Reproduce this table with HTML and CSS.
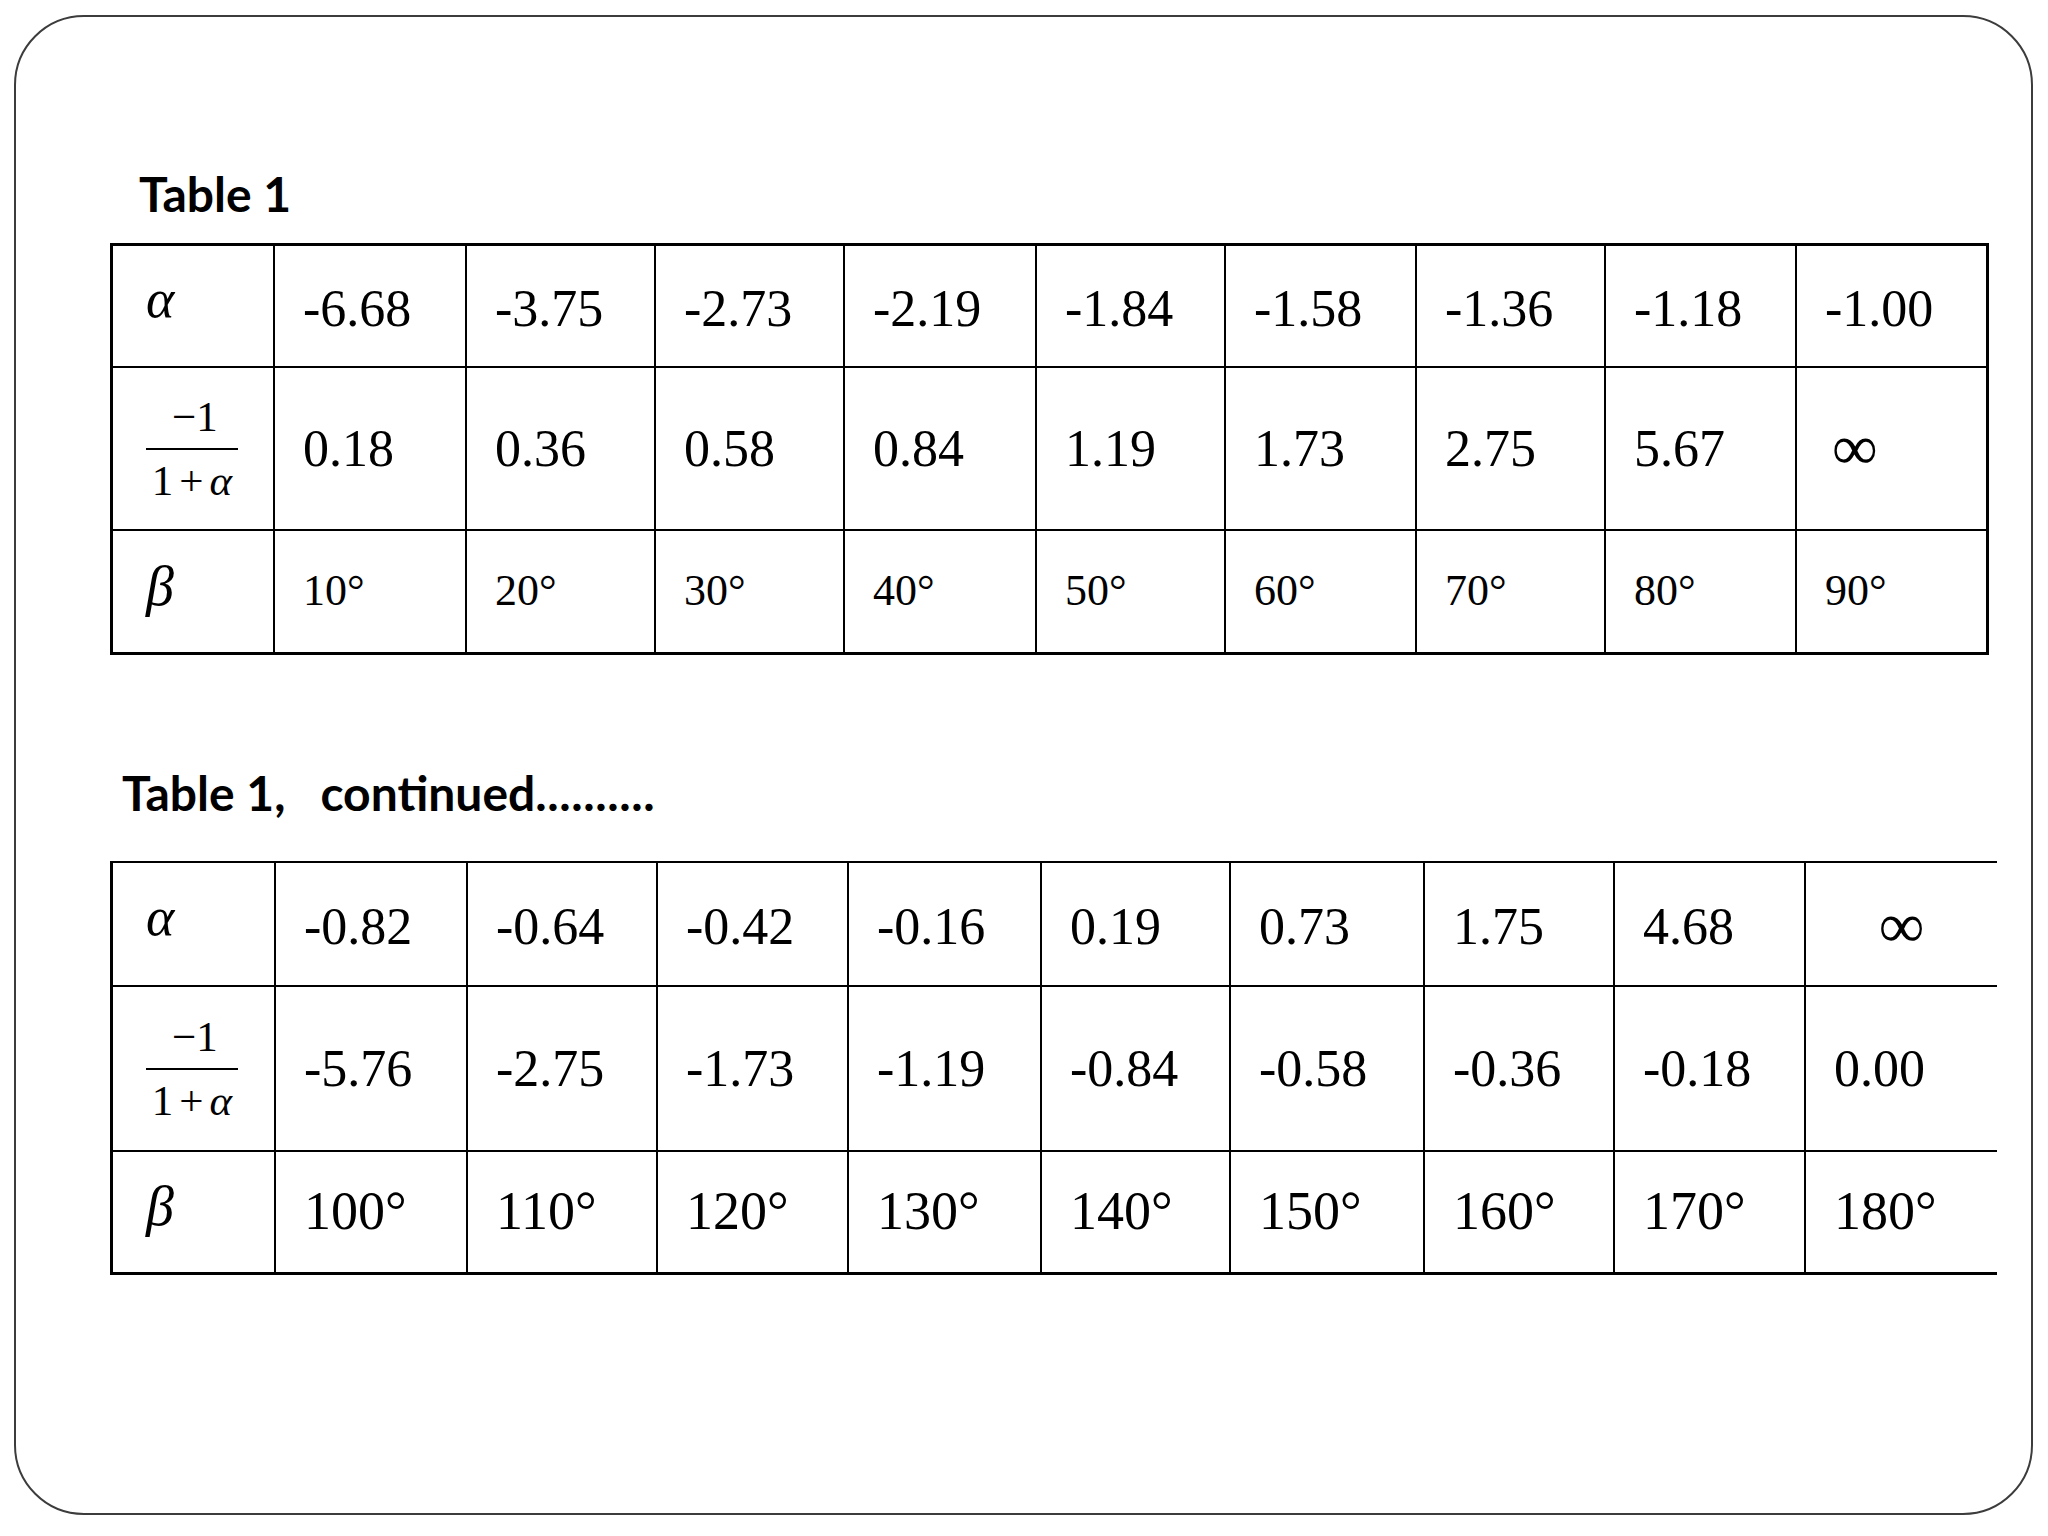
FILE: index.html
```html
<!DOCTYPE html>
<html lang="en">
<head>
<meta charset="utf-8">
<title>Table 1</title>
<link rel="stylesheet" href="styles.css">
</head>
<body>
<div class="slide">
  <h2 class="title title-1">Table 1</h2>
  <div class="grid grid-1">
    <div class="cell head"><span class="sym alpha">α</span></div>
    <div class="cell r1">-6.68</div>
    <div class="cell r1">-3.75</div>
    <div class="cell r1">-2.73</div>
    <div class="cell r1">-2.19</div>
    <div class="cell r1">-1.84</div>
    <div class="cell r1">-1.58</div>
    <div class="cell r1">-1.36</div>
    <div class="cell r1">-1.18</div>
    <div class="cell r1">-1.00</div>

    <div class="cell head">
      <div class="frac"><div class="num">−1</div><div class="bar"></div><div class="den">1<span class="op">+</span><i>α</i></div></div>
    </div>
    <div class="cell">0.18</div>
    <div class="cell">0.36</div>
    <div class="cell">0.58</div>
    <div class="cell">0.84</div>
    <div class="cell">1.19</div>
    <div class="cell">1.73</div>
    <div class="cell">2.75</div>
    <div class="cell">5.67</div>
    <div class="cell inf-left"><span class="inf">∞</span></div>

    <div class="cell head beta-cell"><span class="sym beta">β</span></div>
    <div class="cell small">10°</div>
    <div class="cell small">20°</div>
    <div class="cell small">30°</div>
    <div class="cell small">40°</div>
    <div class="cell small">50°</div>
    <div class="cell small">60°</div>
    <div class="cell small">70°</div>
    <div class="cell small">80°</div>
    <div class="cell small">90°</div>
  </div>

  <h2 class="title title-2">Table 1,&nbsp;&nbsp;&nbsp;continued<span class="dots">..........</span></h2>
  <div class="grid grid-2">
    <div class="cell head"><span class="sym alpha">α</span></div>
    <div class="cell r1">-0.82</div>
    <div class="cell r1">-0.64</div>
    <div class="cell r1">-0.42</div>
    <div class="cell r1">-0.16</div>
    <div class="cell r1">0.19</div>
    <div class="cell r1">0.73</div>
    <div class="cell r1">1.75</div>
    <div class="cell r1">4.68</div>
    <div class="cell r1 center"><span class="inf">∞</span></div>

    <div class="cell head">
      <div class="frac"><div class="num">−1</div><div class="bar"></div><div class="den">1<span class="op">+</span><i>α</i></div></div>
    </div>
    <div class="cell">-5.76</div>
    <div class="cell">-2.75</div>
    <div class="cell">-1.73</div>
    <div class="cell">-1.19</div>
    <div class="cell">-0.84</div>
    <div class="cell">-0.58</div>
    <div class="cell">-0.36</div>
    <div class="cell">-0.18</div>
    <div class="cell">0.00</div>

    <div class="cell head beta-cell"><span class="sym beta">β</span></div>
    <div class="cell large">100°</div>
    <div class="cell large">110°</div>
    <div class="cell large">120°</div>
    <div class="cell large">130°</div>
    <div class="cell large">140°</div>
    <div class="cell large">150°</div>
    <div class="cell large">160°</div>
    <div class="cell large">170°</div>
    <div class="cell large">180°</div>
  </div>
</div>
</body>
</html>
```

FILE: styles.css
```css
html, body {
  margin: 0;
  padding: 0;
  background: #ffffff;
}

.slide {
  box-sizing: border-box;
  width: 2019px;
  height: 1500px;
  margin: 15px 0 0 14px;
  padding-top: 149px;
  border: 2px solid #3c3c3c;
  border-radius: 70px;
  background: #ffffff;
}

.title {
  margin: 0;
  font-family: Lato, "Liberation Sans", sans-serif;
  font-weight: 700;
  font-size: 48px;
  line-height: 56px;
  height: 56px;
  color: #000;
  white-space: nowrap;
}

.title-1 {
  margin-left: 123px;
}

.title-2 {
  margin-top: 110px;
  margin-left: 106px;
}

.title .dots {
  letter-spacing: 0.6px;
}

.grid {
  display: grid;
  width: max-content;
  gap: 2px;
  background: #000;
  font-family: "Liberation Serif", "Times New Roman", serif;
  font-size: 52px;
  color: #000;
}

.grid-1 {
  margin-top: 21px;
  margin-left: 94px;
  border: 3px solid #000;
  grid-template-columns: 160px 190px 187px 187px 190px 187px 189px 187px 189px 189px;
  grid-template-rows: 120px 161px 121px;
}

.grid-2 {
  margin-top: 40px;
  margin-left: 94px;
  border-top: 2px solid #000;
  border-left: 3px solid #000;
  border-bottom: 3px solid #000;
  grid-template-columns: 161px 190px 188px 189px 191px 187px 192px 188px 189px 191px;
  grid-template-rows: 122px 163px 120px;
}

.cell {
  background: #fff;
  display: flex;
  align-items: center;
  box-sizing: border-box;
  padding-left: 28px;
  line-height: 1.1;
  white-space: nowrap;
}

.cell.r1 {
  padding-top: 5px;
}

.cell.head {
  padding-left: 33px;
}

.cell.small {
  font-size: 44px;
}

.cell.large {
  font-size: 54px;
}

.cell.center {
  justify-content: center;
  padding-left: 0;
}

.cell.inf-left {
  padding-left: 35px;
}

.inf {
  font-size: 64px;
}

.sym {
  font-style: italic;
  font-size: 54px;
}

.alpha {
  padding-bottom: 12px;
}

.beta-cell {
  padding-bottom: 10px;
}

.beta {
  font-size: 56px;
}

.frac {
  display: grid;
  grid-template-columns: 92px;
  justify-items: center;
  flex: none;
  font-size: 43px;
  line-height: 42px;
}

.frac .num {
  padding-left: 6px;
  padding-bottom: 10px;
}

.frac .bar {
  justify-self: stretch;
  width: 92px;
  height: 2px;
  background: #000;
}

.frac .den {
  padding-top: 10px;
}

.frac .op {
  padding: 0 6px;
}

.frac i {
  font-style: italic;
}
```
